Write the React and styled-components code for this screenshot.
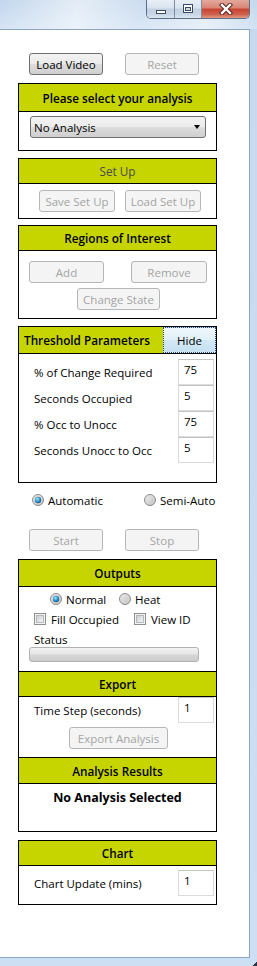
import React, { useId } from "react";
import styled, { createGlobalStyle, css } from "styled-components";

const GlobalStyle = createGlobalStyle`
  html, body { margin: 0; padding: 0; }
  body {
    width: 257px; height: 966px; overflow: hidden;
    font-family: "Open Sans", "Noto Sans", "Liberation Sans", sans-serif;
    font-size: 11.5px; color: #000;
  }
  #root { width: 257px; height: 966px; }
`;

const GREEN = "#c6d400";
const FS = "11.5px";

const Window = styled.div`
  position: relative;
  width: 257px;
  height: 966px;
  display: flex;
  flex-direction: column;
  background: linear-gradient(180deg, #c7d9ee 0%, #cddff2 100%);
  box-sizing: border-box;
`;

const TitleBar = styled.div`
  height: 29px;
  flex: none;
  display: flex;
  justify-content: flex-end;
  align-items: flex-start;
  padding-right: 7px;
  background:
    linear-gradient(100deg, rgba(255,255,255,0) 0%, rgba(255,255,255,0.55) 30%, rgba(255,255,255,0.15) 55%, rgba(255,255,255,0.5) 80%, rgba(255,255,255,0) 100%),
    linear-gradient(180deg, #c2d6ec 0%, #d3e3f4 100%);
`;

const CaptionGroup = styled.div`
  display: flex;
  height: 19px;
  border: 1px solid #5d6f86;
  border-top: none;
  border-radius: 0 0 5px 5px;
  overflow: hidden;
  box-sizing: border-box;
`;

const CaptionBtn = styled.div`
  width: ${(p) => p.$w}px;
  height: 18px;
  display: flex;
  align-items: center;
  justify-content: center;
  box-sizing: border-box;
  ${(p) =>
    p.$close
      ? css`
          background: linear-gradient(180deg, #e3a99c 0%, #d88473 45%, #c6412f 50%, #d0624e 80%, #e29b83 100%);
        `
      : css`
          border-right: 1px solid #7d8ea4;
          background: linear-gradient(180deg, #e8eef6 0%, #d8e2ee 45%, #c2d0e1 50%, #c9d6e6 80%, #dde6f1 100%);
        `}
`;

const Client = styled.div`
  flex: 1;
  margin: 0 7px 8px 0;
  background: #fff;
  border-top: 1px solid #8ea4bf;
  border-right: 1px solid #8fa7c4;
  border-bottom: 1px solid #8fa7c4;
  box-sizing: border-box;
  padding: 23px 0 0 18px;
  display: flex;
  flex-direction: column;
  align-items: flex-start;
`;

const Grip = styled.div`
  position: absolute;
  right: 0;
  bottom: 0;
  width: 4px;
  height: 4px;
  background: linear-gradient(135deg, transparent 50%, #2d3440 50%);
`;

const ButtonRow = styled.div`
  width: 199px;
  box-sizing: border-box;
  display: flex;
  gap: ${(p) => p.$gap || 0}px;
  padding-left: ${(p) => p.$pl || 0}px;
  margin-top: ${(p) => p.$mt || 0}px;
`;

const Btn = styled.div`
  box-sizing: border-box;
  height: 22px;
  width: ${(p) => p.$w}px;
  border-radius: 3px;
  font-size: ${FS};
  display: flex;
  align-items: center;
  justify-content: center;
  white-space: nowrap;
  ${(p) =>
    p.$off
      ? css`
          border: 1px solid #b3b7ba;
          background: #f4f4f4;
          color: #a4a4a4;
        `
      : css`
          border: 1px solid #707070;
          background: linear-gradient(180deg, #f2f2f2 0%, #ebebeb 50%, #dddddd 50%, #cfcfcf 100%);
          color: #000;
        `}
`;

const Panel = styled.div`
  width: 199px;
  box-sizing: border-box;
  border: 1px solid #000;
  margin-top: ${(p) => p.$mt || 0}px;
  display: flex;
  flex-direction: column;
`;

const Header = styled.div`
  box-sizing: border-box;
  height: ${(p) => p.$h}px;
  background: ${GREEN};
  border-bottom: 1px solid #000;
  ${(p) => p.$top && css`border-top: 1px solid #000;`}
  display: flex;
  align-items: center;
  justify-content: ${(p) => (p.$left ? "space-between" : "center")};
  padding-left: ${(p) => (p.$left ? 5 : 0)}px;
  font-weight: ${(p) => (p.$muted ? 400 : 600)};
  color: ${(p) => (p.$muted ? "#4a4a4a" : "#000")};
  font-size: 11.75px;
  white-space: nowrap;
`;

const Body = styled.div`
  box-sizing: border-box;
  padding: ${(p) => p.$pad || "0"};
  height: ${(p) => (p.$h ? `${p.$h}px` : "auto")};
  display: flex;
  flex-direction: column;
`;

const Select = styled.div`
  box-sizing: border-box;
  height: 22px;
  border: 1px solid #707070;
  border-radius: 3px;
  background: linear-gradient(180deg, #f2f2f2 0%, #ebebeb 50%, #dddddd 50%, #cfcfcf 100%);
  display: flex;
  align-items: center;
  justify-content: space-between;
  padding: 0 5px 0 3px;
  font-size: ${FS};
`;

const Arrow = styled.span`
  width: 0;
  height: 0;
  border-left: 3.5px solid transparent;
  border-right: 3.5px solid transparent;
  border-top: 4px solid #000;
`;

const HideBtn = styled.div`
  box-sizing: border-box;
  width: 53px;
  height: 26px;
  border: 1px dotted #1f4f78;
  background: linear-gradient(180deg, #eef7fc 0%, #e1eff8 50%, #d3e8f5 51%, #c6e0f1 100%);
  display: flex;
  align-items: center;
  justify-content: center;
  font-weight: 400;
  font-size: ${FS};
`;

const FieldRow = styled.div`
  height: 26px;
  display: flex;
  align-items: center;
  justify-content: space-between;
  padding: 0 2px 0 15px;
  white-space: nowrap;
`;

const Field = styled.div`
  box-sizing: border-box;
  width: 36px;
  height: 100%;
  border: 1px solid #dadbdc;
  border-top-color: #c2c4c6;
  background: #fff;
  padding: 2px 5px 0;
  font-size: ${FS};
  line-height: 16px;
`;

const OptionRow = styled.div`
  display: grid;
  grid-template-columns: ${(p) => p.$cols};
  padding-left: ${(p) => p.$pl}px;
  margin-top: ${(p) => p.$mt || 0}px;
  height: 16px;
  align-items: center;
  box-sizing: border-box;
`;

const Option = styled.label`
  display: flex;
  align-items: center;
  gap: ${(p) => p.$gap}px;
  font-size: ${FS};
  white-space: nowrap;
`;

const Label = styled.div`
  font-size: ${FS};
  line-height: 14px;
  padding-left: 15px;
  margin-top: ${(p) => p.$mt || 0}px;
`;

const Progress = styled.div`
  box-sizing: border-box;
  width: 170px;
  height: 15px;
  margin-left: 10px;
  border: 1px solid #b2b2b2;
  border-radius: 3px;
  background: linear-gradient(180deg, #f3f3f3 0%, #e6e6e6 45%, #d6d6d6 55%, #cccccc 100%);
`;

const BigText = styled.div`
  font-size: 12.5px;
  font-weight: 700;
  text-align: center;
  line-height: 18px;
`;

const Radio = ({ checked }) => {
  const id = useId().replace(/:/g, "");
  return (
    <svg width="12" height="12" viewBox="0 0 12 12">
      <defs>
        <linearGradient id={`o${id}`} x1="0" y1="0" x2="1" y2="1">
          <stop offset="0" stopColor="#f4f4f4" />
          <stop offset="1" stopColor="#b9b9b9" />
        </linearGradient>
        <radialGradient id={`d${id}`} cx="0.4" cy="0.35" r="0.7">
          <stop offset="0" stopColor="#a6e3fb" />
          <stop offset="0.6" stopColor="#2a8fc7" />
          <stop offset="1" stopColor="#0d4f80" />
        </radialGradient>
      </defs>
      <circle cx="6" cy="6" r="5.5" fill={`url(#o${id})`} stroke="#8b8b8b" />
      <circle cx="6" cy="6" r="4" fill="none" stroke="#d8d8d8" strokeWidth="0.8" />
      {checked && <circle cx="6" cy="6" r="3.2" fill={`url(#d${id})`} />}
    </svg>
  );
};

const Check = () => (
  <svg width="12" height="12" viewBox="0 0 12 12">
    <defs>
      <linearGradient id="cbx" x1="0" y1="0" x2="1" y2="1">
        <stop offset="0" stopColor="#c9ccd1" />
        <stop offset="1" stopColor="#f7f7f7" />
      </linearGradient>
    </defs>
    <rect x="0.5" y="0.5" width="11" height="11" fill="#f4f4f4" stroke="#8e8f8f" />
    <rect x="2.5" y="2.5" width="7" height="7" fill="url(#cbx)" stroke="#a9abae" strokeWidth="0.8" />
  </svg>
);

const MinGlyph = () => (
  <svg width="12" height="6" viewBox="0 0 12 6" style={{ marginTop: 6 }}>
    <rect x="1.5" y="1.5" width="9" height="3" fill="#fff" stroke="#394c63" />
  </svg>
);

const MaxGlyph = () => (
  <svg width="12" height="10" viewBox="0 0 12 10">
    <rect x="1.5" y="0.5" width="9" height="8" fill="#fff" stroke="#394c63" />
    <rect x="3.5" y="3.5" width="5" height="3" fill="#cfdbe9" stroke="#394c63" />
  </svg>
);

const CloseGlyph = () => (
  <svg width="14" height="12" viewBox="0 0 14 12">
    <path d="M3 2 L11 10 M11 2 L3 10" stroke="#5a2320" strokeWidth="4.4" strokeLinecap="square" />
    <path d="M3 2 L11 10 M11 2 L3 10" stroke="#fff" strokeWidth="2.4" strokeLinecap="square" />
  </svg>
);

export default function App() {
  return (
    <>
      <GlobalStyle />
      <Window>
        <TitleBar>
          <CaptionGroup>
            <CaptionBtn $w={28}>
              <MinGlyph />
            </CaptionBtn>
            <CaptionBtn $w={27}>
              <MaxGlyph />
            </CaptionBtn>
            <CaptionBtn $w={47} $close>
              <CloseGlyph />
            </CaptionBtn>
          </CaptionGroup>
        </TitleBar>

        <Client>
          <ButtonRow $pl={11} $gap={22}>
            <Btn $w={74}>Load Video</Btn>
            <Btn $w={74} $off>Reset</Btn>
          </ButtonRow>

          <Panel $mt={8}>
            <Header $h={28}>Please select your analysis</Header>
            <Body $pad="4px 10px 12px 11px">
              <Select>
                <span>No Analysis</span>
                <Arrow />
              </Select>
            </Body>
          </Panel>

          <Panel $mt={7}>
            <Header $h={25} $muted>Set Up</Header>
            <Body $pad="6px 0 6px 0">
              <ButtonRow $pl={20} $gap={10}>
                <Btn $w={76} $off>Save Set Up</Btn>
                <Btn $w={76} $off>Load Set Up</Btn>
              </ButtonRow>
            </Body>
          </Panel>

          <Panel $mt={6}>
            <Header $h={25}>Regions of Interest</Header>
            <Body $pad="10px 0 8px 0">
              <ButtonRow $pl={10} $gap={27}>
                <Btn $w={75} $off>Add</Btn>
                <Btn $w={76} $off>Remove</Btn>
              </ButtonRow>
              <ButtonRow $pl={58} $mt={5}>
                <Btn $w={83} $off>Change State</Btn>
              </ButtonRow>
            </Body>
          </Panel>

          <Panel $mt={7}>
            <Header $h={27} $left>
              <span>Threshold Parameters</span>
              <HideBtn>Hide</HideBtn>
            </Header>
            <Body $pad="5px 0 19px 0">
              <FieldRow>
                <span>% of Change Required</span>
                <Field>75</Field>
              </FieldRow>
              <FieldRow>
                <span>Seconds Occupied</span>
                <Field>5</Field>
              </FieldRow>
              <FieldRow>
                <span>% Occ to Unocc</span>
                <Field>75</Field>
              </FieldRow>
              <FieldRow>
                <span>Seconds Unocc to Occ</span>
                <Field>5</Field>
              </FieldRow>
            </Body>
          </Panel>

          <OptionRow $cols="112px auto" $pl={14} $mt={9}>
            <Option $gap={4}>
              <Radio checked />
              Automatic
            </Option>
            <Option $gap={4}>
              <Radio />
              Semi-Auto
            </Option>
          </OptionRow>

          <ButtonRow $pl={11} $gap={22} $mt={21}>
            <Btn $w={74} $off>Start</Btn>
            <Btn $w={74} $off>Stop</Btn>
          </ButtonRow>

          <Panel $mt={8}>
            <Header $h={27}>Outputs</Header>
            <Body $pad="4px 0 9px 0" $h={84}>
              <OptionRow $cols="69px auto" $pl={31}>
                <Option $gap={4}>
                  <Radio checked />
                  Normal
                </Option>
                <Option $gap={4}>
                  <Radio />
                  Heat
                </Option>
              </OptionRow>
              <OptionRow $cols="100px auto" $pl={15} $mt={4}>
                <Option $gap={5}>
                  <Check />
                  Fill Occupied
                </Option>
                <Option $gap={5}>
                  <Check />
                  View ID
                </Option>
              </OptionRow>
              <Label $mt={6}>Status</Label>
              <Progress />
            </Body>

            <Header $h={26} $top>Export</Header>
            <Body $pad="0 0 8px 0" $h={60}>
              <FieldRow>
                <span>Time Step (seconds)</span>
                <Field>1</Field>
              </FieldRow>
              <ButtonRow $pl={50} $mt={4}>
                <Btn $w={99} $off>Export Analysis</Btn>
              </ButtonRow>
            </Body>

            <Header $h={27} $top>Analysis Results</Header>
            <Body $pad="5px 0 0 0" $h={47}>
              <BigText>No Analysis Selected</BigText>
            </Body>
          </Panel>

          <Panel $mt={8}>
            <Header $h={25}>Chart</Header>
            <Body $pad="4px 0 8px 0">
              <FieldRow>
                <span>Chart Update (mins)</span>
                <Field>1</Field>
              </FieldRow>
            </Body>
          </Panel>
        </Client>
        <Grip />
      </Window>
    </>
  );
}
